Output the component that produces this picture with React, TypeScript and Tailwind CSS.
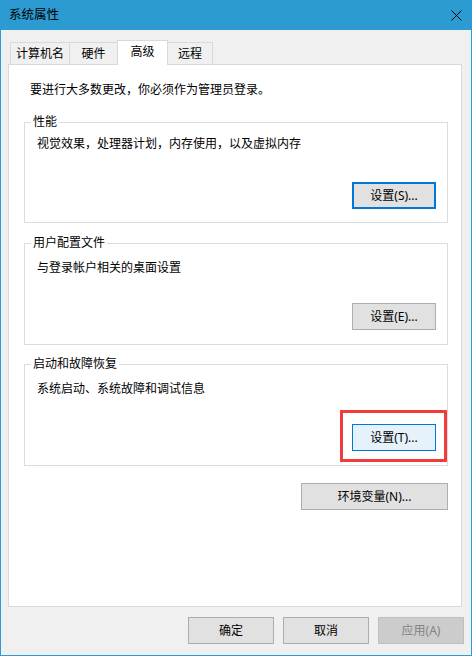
import * as React from "react";

const font = { fontFamily: '"Noto Sans", "Noto Sans CJK SC", sans-serif' };

function Tab({ label, w, active }: { label: string; w: string; active?: boolean }) {
  if (active) {
    return (
      <div
        className={`${w} relative z-10 -mb-px -ml-px flex h-[25px] items-center justify-center border border-b-0 border-[#d9d9d9] bg-white pb-[2px]`}
      >
        {label}
      </div>
    );
  }
  return (
    <div
      className={`${w} -ml-px flex h-[22px] items-center justify-center border border-b-0 border-[#d9d9d9] bg-[#f0f0f0] first:ml-0`}
    >
      {label}
    </div>
  );
}

function WinButton({
  label,
  variant = "normal",
  className = "",
}: {
  label: string;
  variant?: "normal" | "default" | "hover" | "disabled";
  className?: string;
}) {
  const styles = {
    normal: "border border-[#adadad] bg-[#e1e1e1] text-black",
    default: "border-2 border-[#0078d7] bg-[#e1e1e1] text-black",
    hover: "border border-[#0078d7] bg-[#e5f1fb] text-black",
    disabled: "border border-[#bfbfbf] bg-[#cccccc] text-[#838383]",
  }[variant];
  return (
    <button
      type="button"
      className={`flex h-[27px] items-center justify-center text-[12px] leading-[16px] ${styles} ${className}`}
      style={font}
    >
      {label}
    </button>
  );
}

// group box: caption sits on the top border line
function Group({
  title,
  text,
  button,
  className,
  textPad,
  btnGap,
  bottomPad,
}: {
  title: string;
  text: string;
  button: React.ReactNode;
  className: string;
  textPad: string;
  btnGap: string;
  bottomPad: string;
}) {
  return (
    <div className={`ml-[15px] flex w-[424px] flex-col border border-[#dcdcdc] pl-[12px] pr-[11px] ${className} ${bottomPad}`}>
      <div className="-ml-[6px] -mt-[9px] w-fit bg-white px-[2px] leading-[16px]">{title}</div>
      <div className={`leading-[16px] ${textPad}`}>{text}</div>
      <div className={`flex justify-end ${btnGap}`}>{button}</div>
    </div>
  );
}

export default function App() {
  return (
    <div
      className="flex h-[656px] w-[472px] flex-col border-x border-b border-[#2b9bd1] bg-[#f0f0f0] text-[12px] text-black"
      style={font}
    >
      {/* title bar */}
      <div className="-mx-px flex h-[30px] shrink-0 items-center justify-between bg-[#2b9bd1] pl-[9px] pr-[10px]">
        <span className="text-[12.5px] leading-[16px] text-black">系统属性</span>
        <svg width="11" height="11" viewBox="0 0 11 11" className="mt-[1px]">
          <path d="M0.5 0.5 L10.5 10.5 M10.5 0.5 L0.5 10.5" stroke="#000" strokeWidth="1" />
        </svg>
      </div>

      <div className="flex flex-col px-[7px]">
        {/* tabs */}
        <div className="mt-[10px] flex items-end pl-[2px]">
          <Tab label="计算机名" w="w-[60px]" />
          <Tab label="硬件" w="w-[49px]" />
          <Tab label="高级" w="w-[51px]" active />
          <Tab label="远程" w="w-[46px]" />
        </div>

        {/* panel */}
        <div className="flex h-[543px] w-[454px] flex-col border border-[#d9d9d9] bg-white">
          <div className="ml-[21px] mt-[17px] leading-[16px]">要进行大多数更改，你必须作为管理员登录。</div>

          <Group
            title="性能"
            text="视觉效果，处理器计划，内存使用，以及虚拟内存"
            className="mt-[24px]"
            textPad="pt-[6px]"
            btnGap="mt-[30px]"
            bottomPad="pb-[13px]"
            button={<WinButton label="设置(S)..." variant="default" className="w-[84px]" />}
          />

          <Group
            title="用户配置文件"
            text="与登录帐户相关的桌面设置"
            className="mt-[20px]"
            textPad="pt-[9px]"
            btnGap="mt-[27px]"
            bottomPad="pb-[14px]"
            button={<WinButton label="设置(E)..." className="w-[84px]" />}
          />

          <Group
            title="启动和故障恢复"
            text="系统启动、系统故障和调试信息"
            className="mt-[19px]"
            textPad="pt-[9px]"
            btnGap="mt-[27px]"
            bottomPad="pb-[14px]"
            button={
              <div className="relative">
                <WinButton label="设置(T)..." variant="hover" className="w-[84px]" />
                <div className="pointer-events-none absolute -bottom-[11px] -left-[12px] -right-[11px] -top-[14px] border-[3px] border-[#f23b3b]" />
              </div>
            }
          />

          <div className="ml-[15px] mt-[17px] flex w-[424px] justify-end">
            <WinButton label="环境变量(N)..." className="w-[147px]" />
          </div>
        </div>

        {/* dialog buttons */}
        <div className="mt-[10px] flex justify-end gap-[9px]">
          <WinButton label="确定" className="w-[86px]" />
          <WinButton label="取消" className="w-[86px]" />
          <WinButton label="应用(A)" variant="disabled" className="w-[86px]" />
        </div>
      </div>
    </div>
  );
}
